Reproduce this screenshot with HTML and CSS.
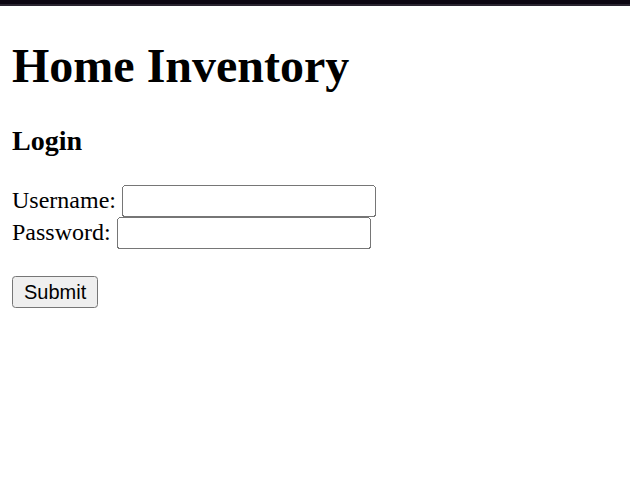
FILE: index.html
```html
<!DOCTYPE html>
<html>
<head>
<meta charset="utf-8">
<title>Home Inventory</title>
<link rel="stylesheet" href="styles.css">
</head>
<body>
<div class="topbar"></div>
<div class="page">
  <h1 class="title">Home Inventory</h1>
  <h3 class="subtitle">Login</h3>
  <form class="login-form">
    <label class="field">Username: <input class="text-input" type="text" name="username"></label><br>
    <label class="field">Password: <input class="text-input" type="password" name="password"></label><br>
    <br>
    <input class="submit-btn" type="submit" value="Submit">
  </form>
</div>
</body>
</html>
```

FILE: styles.css
```css
html, body {
  margin: 0;
  padding: 0;
  background: #ffffff;
}
body {
  font-family: "Liberation Serif", "Times New Roman", serif;
  color: #000;
}
.topbar {
  height: 6px;
  background: #0c0612;
  border-bottom: 2px solid #2a2430;
  box-sizing: border-box;
}
.page {
  margin: 8px;
  zoom: 1.5;
}
.title {
  font-size: 32px;
  font-weight: bold;
  margin: 21.44px 0;
}
.subtitle {
  font-size: 18.72px;
  font-weight: bold;
  margin: 18.72px 0;
}
.login-form {
  font-size: 16px;
}
.text-input,
.submit-btn {
  font-family: "Liberation Sans", Arial, sans-serif;
  font-size: 13.333px;
}
.text-input {
  box-sizing: border-box;
  width: 169.5px;
}
```
